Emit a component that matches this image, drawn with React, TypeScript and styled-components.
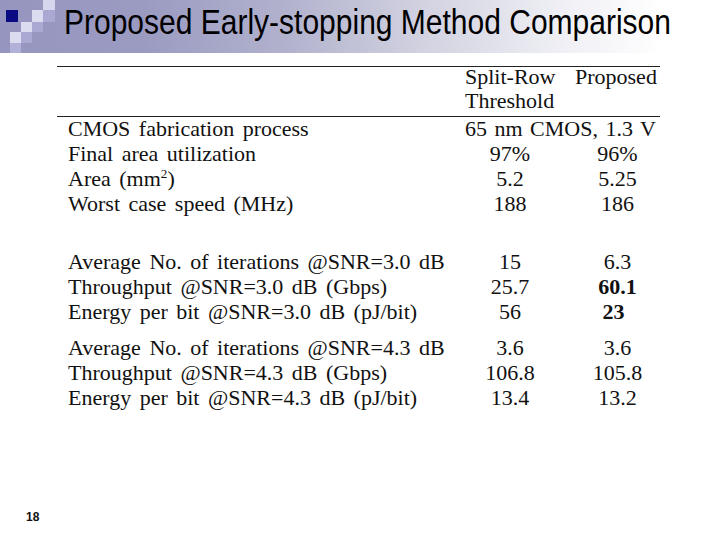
import { FC, Fragment, ReactNode } from "react";
import styled, { createGlobalStyle } from "styled-components";

const GlobalStyle = createGlobalStyle`
  html, body {
    margin: 0;
    padding: 0;
    background: #fff;
  }
`;

const Slide = styled.div`
  width: 720px;
  height: 540px;
  display: flex;
  flex-direction: column;
  background: #fff;
  overflow: hidden;
`;

const TitleBar = styled.div`
  height: 53px;
  display: flex;
  align-items: flex-start;
  background: linear-gradient(
    90deg,
    #9595bf 0%,
    #9b9bc2 20%,
    #b2b2ce 40%,
    #d4d4e2 60%,
    #efeff5 78%,
    #ffffff 92%
  );
`;

const Title = styled.h1`
  margin: 0;
  padding: 9px 0 0 4px;
  font-family: "Liberation Sans", Arial, sans-serif;
  font-weight: normal;
  font-size: 30px;
  line-height: 30px;
  color: #000;
  white-space: nowrap;
  transform: scaleY(1.15);
  transform-origin: 0 34px;
`;

const Table = styled.div`
  margin: 13px 0 0 57px;
  width: 603px;
  display: grid;
  grid-template-columns: 408px 90px 20px 85px;
  font-family: "Liberation Serif", "Times New Roman", serif;
  font-size: 22px;
  line-height: 25px;
  color: #111;
  word-spacing: 3px;
`;

const Rule = styled.div<{ $pull?: number }>`
  grid-column: 1 / -1;
  height: 0;
  border-top: 1.5px solid #222;
  margin-bottom: ${({ $pull }) => -($pull ?? 0)}px;
`;

const Gap = styled.div<{ $h: number }>`
  grid-column: 1 / -1;
  height: ${({ $h }) => $h}px;
`;

const Label = styled.div`
  grid-column: 1;
  padding-left: 11px;
  white-space: nowrap;
`;

const Head = styled.div<{ $col: number; $first?: boolean }>`
  grid-column: ${({ $col }) => $col};
  line-height: 24px;
  white-space: nowrap;
  margin-top: ${({ $first }) => ($first ? -2 : 0)}px;
`;

const Cell = styled.div<{ $col: number; $bold?: boolean; $shift?: number }>`
  grid-column: ${({ $col }) => $col};
  text-align: center;
  white-space: nowrap;
  font-weight: ${({ $bold }) => ($bold ? "bold" : "normal")};
  padding-right: ${({ $shift }) => $shift ?? 0}px;
`;

const Span = styled.div`
  grid-column: 2 / 5;
  white-space: nowrap;
  word-spacing: 2px;
`;

const Footer = styled.div`
  margin-top: auto;
  padding: 0 0 16px 26px;
  font-family: "Liberation Sans", Arial, sans-serif;
  font-weight: bold;
  font-size: 12px;
  line-height: 14px;
  color: #111;
`;

const Logo: FC = () => (
  <svg width="60" height="53" viewBox="0 0 60 53">
    <rect x="43" y="0" width="12" height="10" fill="#d6d6ec" />
    <rect x="6" y="10" width="12" height="12" fill="#0a0a82" />
    <rect x="32" y="10" width="11" height="12" fill="#dcdcf0" />
    <rect x="43" y="10" width="12" height="12" fill="#a9a9d3" />
    <rect x="21" y="22" width="11" height="10" fill="#dcdcf0" />
    <rect x="32" y="22" width="11" height="10" fill="#a9a9d3" />
    <rect x="10" y="32" width="11" height="11" fill="#dcdcf0" />
    <rect x="21" y="32" width="11" height="11" fill="#a9a9d3" />
    <rect x="10" y="43" width="11" height="10" fill="#b1b1d9" />
  </svg>
);

type Row = {
  label: ReactNode;
  a: string;
  b: string;
  boldB?: boolean;
  shiftB?: number;
};

const group1: Row[] = [
  { label: "Final area utilization", a: "97%", b: "96%" },
  {
    label: (
      <>
        Area (mm<sup style={{ fontSize: "0.6em", lineHeight: 0 }}>2</sup>)
      </>
    ),
    a: "5.2",
    b: "5.25",
  },
  { label: "Worst case speed (MHz)", a: "188", b: "186" },
];

const group2: Row[] = [
  { label: "Average No. of iterations @SNR=3.0 dB", a: "15", b: "6.3" },
  { label: "Throughput @SNR=3.0 dB (Gbps)", a: "25.7", b: "60.1", boldB: true },
  {
    label: "Energy per bit @SNR=3.0 dB (pJ/bit)",
    a: "56",
    b: "23",
    boldB: true,
    shiftB: 8,
  },
];

const group3: Row[] = [
  { label: "Average No. of iterations @SNR=4.3 dB", a: "3.6", b: "3.6" },
  { label: "Throughput @SNR=4.3 dB (Gbps)", a: "106.8", b: "105.8" },
  { label: "Energy per bit @SNR=4.3 dB (pJ/bit)", a: "13.4", b: "13.2" },
];

const renderRows = (rows: Row[]) =>
  rows.map((r, i) => (
    <Fragment key={i}>
      <Label>{r.label}</Label>
      <Cell $col={2}>{r.a}</Cell>
      <Cell $col={4} $bold={r.boldB} $shift={r.shiftB}>
        {r.b}
      </Cell>
    </Fragment>
  ));

const App: FC = () => (
  <>
    <GlobalStyle />
    <Slide>
      <TitleBar>
        <Logo />
        <Title>Proposed Early-stopping Method Comparison</Title>
      </TitleBar>
      <Table>
        <Rule />
        <Head $col={2} $first>
          Split-Row
        </Head>
        <Head $col={4} $first>
          Proposed
        </Head>
        <Head $col={2}>Threshold</Head>
        <Gap $h={3} />
        <Rule $pull={2} />
        <Label>CMOS fabrication process</Label>
        <Span>65 nm CMOS, 1.3 V</Span>
        {renderRows(group1)}
        <Gap $h={33} />
        {renderRows(group2)}
        <Gap $h={11} />
        {renderRows(group3)}
      </Table>
      <Footer>18</Footer>
    </Slide>
  </>
);

export default App;
